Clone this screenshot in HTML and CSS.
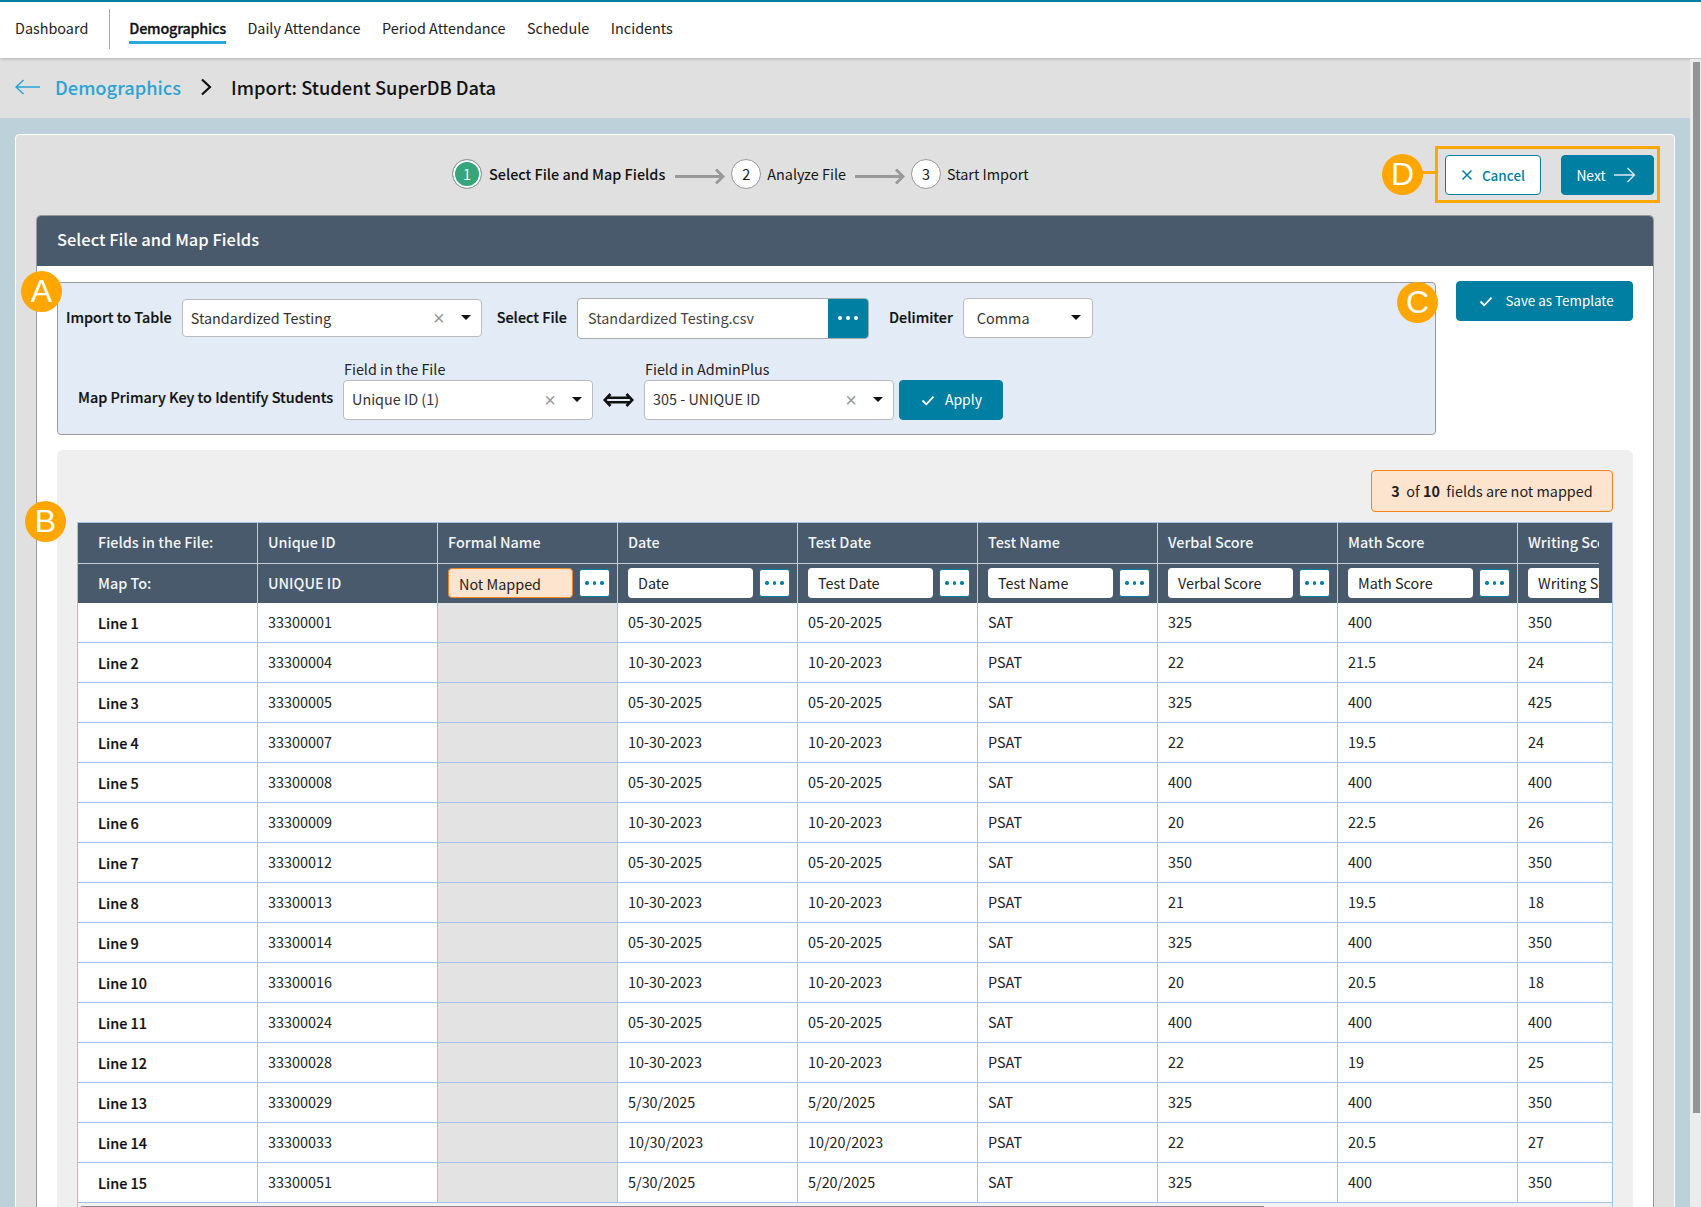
FILE: index.html
```html
<!DOCTYPE html>
<html lang="en">
<head>
<meta charset="utf-8">
<title>Import: Student SuperDB Data</title>
<link rel="stylesheet" href="styles.css">
</head>
<body>
<nav class="nav">
  <a class="nav-link dash">Dashboard</a>
  <span class="nav-sep"></span>
  <a class="nav-link active">Demographics</a>
  <a class="nav-link">Daily Attendance</a>
  <a class="nav-link">Period Attendance</a>
  <a class="nav-link">Schedule</a>
  <a class="nav-link">Incidents</a>
</nav>
<header class="crumbs">
  <svg class="crumb-back" width="25" height="16" viewBox="0 0 25 16"><path d="M25 8H1M8.500 1 1 8l7.500 7" fill="none" stroke="#29a3d6" stroke-width="1.500"/></svg>
  <a class="crumb-link">Demographics</a>
  <svg class="crumb-chev" width="12" height="18" viewBox="0 0 12 18"><path d="M2 1.500 10 9l-8 7.500" fill="none" stroke="#111" stroke-width="2.200"/></svg>
  <h1 class="crumb-title">Import: Student SuperDB Data</h1>
</header>
<main class="stage">
  <section class="card">
    <div class="topbar">
      <ol class="steps">
        <li class="step current"><span class="bubble">1</span><span>Select File and Map Fields</span></li>
        <li class="step-arrow"><svg width="50" height="16" viewBox="0 0 50 16"><path d="M0 8.500H48M41 1.500l7 7-7 7" fill="none" stroke="#999" stroke-width="2.800"/></svg></li>
        <li class="step"><span class="bubble">2</span><span>Analyze File</span></li>
        <li class="step-arrow second"><svg width="50" height="16" viewBox="0 0 50 16"><path d="M0 8.500H48M41 1.500l7 7-7 7" fill="none" stroke="#999" stroke-width="2.800"/></svg></li>
        <li class="step"><span class="bubble">3</span><span>Start Import</span></li>
      </ol>
      <div class="actions">
        <button class="btn btn-ghost cancel"><svg width="12" height="12" viewBox="0 0 12 12"><path d="M1.500 1.500l9 9M10.500 1.500l-9 9" stroke="#007fa3" stroke-width="1.500" fill="none"/></svg>Cancel</button>
        <button class="btn btn-solid next">Next<svg width="22" height="16" viewBox="0 0 22 16"><path d="M0 8H20.500M13.500 1l7 7-7 7" fill="none" stroke="#dcedf3" stroke-width="1.300"/></svg></button>
        <span class="callout-box"></span>
        <span class="callout-line"></span>
        <span class="marker marker-d">D</span>
      </div>
    </div>

    <section class="panel">
      <h2 class="panel-title">Select File and Map Fields</h2>
      <div class="panel-body">
        <div class="top-tools">
          <div class="setup">
            <span class="marker marker-a">A</span>
            <div class="setup-row first">
              <label class="lbl">Import to Table</label>
              <div class="select s-table"><span class="sel-text">Standardized Testing</span><span class="clear">×</span><span class="caret"></span></div>
              <label class="lbl l-file">Select File</label>
              <div class="file"><span class="file-name">Standardized Testing.csv</span><span class="file-btn"><i></i><i></i><i></i></span></div>
              <label class="lbl l-delim">Delimiter</label>
              <div class="select s-delim"><span class="sel-text">Comma</span><span class="caret"></span></div>
            </div>
            <div class="setup-row second">
              <label class="lbl l-map">Map Primary Key to Identify Students</label>
              <div class="field">
                <span class="field-cap">Field in the File</span>
                <div class="select s-map"><span class="sel-text">Unique ID (1)</span><span class="clear">×</span><span class="caret"></span></div>
              </div>
              <svg class="swap" width="31" height="16" viewBox="0 0 31 16"><path d="M7.500 2 1.800 8l5.700 6M23.500 2l5.700 6-5.700 6M3 5.700H28M3 10.300H28" fill="none" stroke="#111" stroke-width="2.600"/></svg>
              <div class="field">
                <span class="field-cap">Field in AdminPlus</span>
                <div class="select s-map"><span class="sel-text">305 - UNIQUE ID</span><span class="clear">×</span><span class="caret"></span></div>
              </div>
              <button class="btn btn-solid apply"><svg width="14" height="11" viewBox="0 0 14 11"><path d="M1.500 5.500 5.300 9.300 12.500 1.700" fill="none" stroke="#fff" stroke-width="1.800"/></svg><span>Apply</span></button>
            </div>
          </div>
          <div class="save-wrap">
            <span class="marker marker-c">C</span>
            <button class="btn btn-solid save"><svg width="14" height="11" viewBox="0 0 14 11"><path d="M1.500 5.500 5.300 9.300 12.500 1.700" fill="none" stroke="#fff" stroke-width="1.800"/></svg><span>Save as Template</span></button>
          </div>
        </div>

        <div class="mapping">
          <span class="marker marker-b">B</span>
          <div class="notice"><b>3</b>&nbsp; of <b>10</b>&nbsp; fields are not mapped</div>
          <div class="grid-wrap">
            <table class="grid">
              <colgroup><col class="c1"><col class="c"><col class="c"><col class="c"><col class="c"><col class="c"><col class="c"><col class="c"><col class="clast"></colgroup>
              <thead>
                <tr class="h1">
                  <th class="first">Fields in the File:</th><th>Unique ID</th><th>Formal Name</th><th>Date</th><th>Test Date</th><th>Test Name</th><th>Verbal Score</th><th>Math Score</th>
                  <th class="cut"><div class="clip">Writing Score</div></th>
                </tr>
                <tr class="h2">
                  <th class="first">Map To:</th><th>UNIQUE ID</th>
                  <td><div class="map"><span class="map-in warn">Not Mapped</span><span class="dots"><i></i><i></i><i></i></span></div></td>
                  <td><div class="map"><span class="map-in">Date</span><span class="dots"><i></i><i></i><i></i></span></div></td>
                  <td><div class="map"><span class="map-in">Test Date</span><span class="dots"><i></i><i></i><i></i></span></div></td>
                  <td><div class="map"><span class="map-in">Test Name</span><span class="dots"><i></i><i></i><i></i></span></div></td>
                  <td><div class="map"><span class="map-in">Verbal Score</span><span class="dots"><i></i><i></i><i></i></span></div></td>
                  <td><div class="map"><span class="map-in">Math Score</span><span class="dots"><i></i><i></i><i></i></span></div></td>
                  <td class="cut"><div class="clip map-clip"><span class="map-in">Writing Score</span></div></td>
                </tr>
              </thead>
              <tbody>
                <tr><th>Line 1</th><td>33300001</td><td class="na"></td><td>05-30-2025</td><td>05-20-2025</td><td>SAT</td><td>325</td><td>400</td><td>350</td></tr>
                <tr><th>Line 2</th><td>33300004</td><td class="na"></td><td>10-30-2023</td><td>10-20-2023</td><td>PSAT</td><td>22</td><td>21.5</td><td>24</td></tr>
                <tr><th>Line 3</th><td>33300005</td><td class="na"></td><td>05-30-2025</td><td>05-20-2025</td><td>SAT</td><td>325</td><td>400</td><td>425</td></tr>
                <tr><th>Line 4</th><td>33300007</td><td class="na"></td><td>10-30-2023</td><td>10-20-2023</td><td>PSAT</td><td>22</td><td>19.5</td><td>24</td></tr>
                <tr><th>Line 5</th><td>33300008</td><td class="na"></td><td>05-30-2025</td><td>05-20-2025</td><td>SAT</td><td>400</td><td>400</td><td>400</td></tr>
                <tr><th>Line 6</th><td>33300009</td><td class="na"></td><td>10-30-2023</td><td>10-20-2023</td><td>PSAT</td><td>20</td><td>22.5</td><td>26</td></tr>
                <tr><th>Line 7</th><td>33300012</td><td class="na"></td><td>05-30-2025</td><td>05-20-2025</td><td>SAT</td><td>350</td><td>400</td><td>350</td></tr>
                <tr><th>Line 8</th><td>33300013</td><td class="na"></td><td>10-30-2023</td><td>10-20-2023</td><td>PSAT</td><td>21</td><td>19.5</td><td>18</td></tr>
                <tr><th>Line 9</th><td>33300014</td><td class="na"></td><td>05-30-2025</td><td>05-20-2025</td><td>SAT</td><td>325</td><td>400</td><td>350</td></tr>
                <tr><th>Line 10</th><td>33300016</td><td class="na"></td><td>10-30-2023</td><td>10-20-2023</td><td>PSAT</td><td>20</td><td>20.5</td><td>18</td></tr>
                <tr><th>Line 11</th><td>33300024</td><td class="na"></td><td>05-30-2025</td><td>05-20-2025</td><td>SAT</td><td>400</td><td>400</td><td>400</td></tr>
                <tr><th>Line 12</th><td>33300028</td><td class="na"></td><td>10-30-2023</td><td>10-20-2023</td><td>PSAT</td><td>22</td><td>19</td><td>25</td></tr>
                <tr><th>Line 13</th><td>33300029</td><td class="na"></td><td>5/30/2025</td><td>5/20/2025</td><td>SAT</td><td>325</td><td>400</td><td>350</td></tr>
                <tr><th>Line 14</th><td>33300033</td><td class="na"></td><td>10/30/2023</td><td>10/20/2023</td><td>PSAT</td><td>22</td><td>20.5</td><td>27</td></tr>
                <tr><th>Line 15</th><td>33300051</td><td class="na"></td><td>5/30/2025</td><td>5/20/2025</td><td>SAT</td><td>325</td><td>400</td><td>350</td></tr>
              </tbody>
            </table>
            <div class="hscroll"><span class="hthumb"></span></div>
          </div>
        </div>
      </div>
    </section>
  </section>
</main>
<div class="vscroll"><span class="vthumb"></span></div>
</body>
</html>
```
FILE: styles.css
```css
* { box-sizing: border-box; }
html, body { height: 100%; }
body {
  margin: 0;
  width: 1701px;
  height: 1207px;
  overflow: hidden;
  position: relative;
  background: #bdd1da;
  color: #161616;
  font-family: "Noto Sans CJK SC", "Noto Sans", sans-serif;
  font-size: 14.4px;
  line-height: 20px;
}
i { display: block; }
h1, h2 { margin: 0; }
ol { list-style: none; margin: 0; padding: 0; }

.nav {
  height: 58px;
  border-top: 2px solid #007fa3;
  background: #fff;
  display: flex;
  align-items: center;
  padding: 0 0 4px 15px;
  gap: 21.5px;
  box-shadow: 0 1px 3px rgba(0,0,0,.22);
  position: relative;
}
.nav-link { color: #222; position: relative; }
.nav-sep { width: 1px; height: 40px; background: #aaa; margin: 2px -2px 0 -1px; }
.nav-link.active { font-weight: 500; color: #111; -webkit-text-stroke: .3px #111; letter-spacing: -.22px; }
.nav-link.active::after {
  content: "";
  position: absolute;
  left: 0; right: 0; bottom: -6px;
  height: 3px;
  background: #29a8dc;
}

.crumbs {
  height: 60px;
  background: #e0e0e0;
  display: flex;
  align-items: center;
  padding: 0 0 2px 15px;
  font-size: 18.3px;
}
.crumb-link { color: #29a3d6; margin-left: 15px; font-weight: 500; }
.crumb-chev { margin-left: 19px; }
.crumb-title { font-size: 18.3px; font-weight: 500; color: #111; margin-left: 19px; line-height: 24px; }

.stage { padding: 16px 15px 0 15px; width: 1690px; background: #bdd1da; height: 1089px; }
.card {
  height: 1100px;
  background: #e0e0e0;
  border: 1px solid #fff;
  border-radius: 4px;
  padding: 0 20px 0 20px;
}
.topbar { height: 80px; display: flex; align-items: center; position: relative; }
.steps { display: flex; align-items: center; margin-left: 416px; margin-top: -3px; }
.step { display: flex; align-items: center; gap: 6px; }
.step.current { font-weight: 500; color: #111; gap: 7px; }
.bubble {
  width: 30px; height: 30px;
  border-radius: 50%;
  background: #fff;
  border: 1px solid #999;
  display: flex; align-items: center; justify-content: center;
  font-weight: 400;
}
.current .bubble { background: #35a67c; color: #fff; box-shadow: inset 0 0 0 2px #fff; }
.step-arrow { margin: 4px 6px 0 10px; line-height: 0; }
.step-arrow.second { margin-left: 9px; }

.actions { margin-left: auto; display: flex; gap: 20px; position: relative; }
.btn {
  font: inherit;
  height: 40px;
  border-radius: 4px;
  display: inline-flex;
  align-items: center;
  justify-content: center;
  padding: 0;
  border: 1px solid #007fa3;
}
.btn-solid { background: #007fa3; color: #fff; }
.btn-ghost { background: #fff; color: #007fa3; }
.cancel { width: 96px; gap: 9px; font-weight: 500; font-size: 13.5px; }
.next { width: 93px; gap: 8px; font-weight: 400; font-size: 13.8px; padding-right: 3px; }
.callout-box {
  position: absolute;
  left: -10px; right: -6px; top: -9px; bottom: -8px;
  border: 3px solid #ffa700;
  pointer-events: none;
}
.callout-line { position: absolute; left: -24px; width: 14px; top: 16px; height: 3px; background: #ffa700; }
.marker {
  position: absolute;
  width: 41px; height: 41px;
  border-radius: 50%;
  background: #ffa700;
  color: #fff;
  font-family: "Liberation Sans", sans-serif;
  font-size: 32px;
  line-height: 41px;
  text-align: center;
}
.marker-d { left: -63px; top: -1px; }
.marker-a { left: -37px; top: -12px; }
.marker-c { left: -59px; top: 1px; }
.marker-b { left: -32px; top: 51px; }

.panel {
  height: 1000px;
  background: #fff;
  border: 1px solid #999;
  border-bottom: 0;
  border-radius: 5px 5px 0 0;
}
.panel-title {
  height: 50px;
  background: #485a6c;
  color: #fff;
  font-size: 16.5px;
  font-weight: 500;
  line-height: 46px;
  padding-left: 20px;
  border-radius: 4px 4px 0 0;
}
.panel-body { padding: 16px 19px 0 20px; }
.top-tools { display: flex; gap: 20px; align-items: flex-start; }

.setup {
  position: relative;
  flex: none;
  width: 1379px;
  height: 153px;
  background: #e3ecf6;
  border: 1px solid #999;
  border-radius: 4px;
}
.setup-row { display: flex; align-items: center; }
.setup-row.first { padding: 14px 0 0 8px; height: 56px; }
.setup-row.first .lbl { padding-bottom: 2px; }
.setup-row.second { padding: 21px 0 0 20px; align-items: flex-end; height: 81px; }
.lbl { font-weight: 500; color: #111; white-space: nowrap; -webkit-text-stroke: .2px #111; }
.l-file { margin-left: 15px; }
.l-delim { margin-left: 20px; }
.l-map { width: 265px; height: 33px; }

.select {
  height: 38px;
  background: #fff;
  border: 1px solid #bbb;
  border-radius: 4px;
  display: flex;
  align-items: center;
  padding: 0 10px 0 8px;
}
.sel-text { flex: 1; color: #333; }
.clear { color: #999; font-size: 20px; font-family: "Liberation Sans", sans-serif; margin-right: 16px; }
.caret { width: 0; height: 0; border: 5px solid transparent; border-top: 5px solid #111; border-bottom: 0; margin: 0 0 1px; }
.s-table { width: 300px; margin-left: 10px; }
.s-delim { width: 130px; margin-left: 10px; padding: 0 11px 1px 13px; height: 40px; }
.file {
  width: 292px; height: 41px;
  margin-left: 10px;
  background: #fff;
  border: 1px solid #aaa;
  border-radius: 4px;
  display: flex;
  align-items: center;
  padding-left: 10px;
  overflow: hidden;
}
.file-name { flex: 1; color: #444; padding-bottom: 1px; }
.file-btn {
  width: 40px; height: 39px;
  background: #007fa3;
  display: flex; align-items: center; justify-content: center; gap: 4px;
}
.file-btn i { width: 4px; height: 4px; border-radius: 50%; background: #fff; }

.field { display: flex; flex-direction: column; }
.field-cap { line-height: 19px; margin: 0 0 2px 1px; color: #222; }
.s-map { width: 250px; height: 40px; padding-left: 8px; padding-bottom: 3px; }
.s-map .caret { margin-top: 2px; }
.s-map .clear { margin-top: 3px; }
.swap { margin: 0 10px 12px; }
.apply { width: 104px; gap: 10px; margin-left: 5px; font-weight: 400; font-size: 14px; padding-left: 1px; }
.apply span, .save span { padding-bottom: 2px; }

.save-wrap { position: relative; margin-top: -1px; }
.save { width: 177px; gap: 12px; padding-left: 4px; font-weight: 400; font-size: 13.4px; }

.mapping {
  position: relative;
  margin-top: 15px;
  width: 1576px;
  height: 800px;
  background: #efefef;
  border-radius: 6px;
  padding: 20px 20px 0;
}
.notice {
  width: 242px; height: 42px;
  margin: 0 0 10px auto;
  background: #fde4cf;
  border: 1px solid #f5821f;
  border-radius: 4px;
  display: flex; align-items: center; justify-content: center;
  white-space: pre;
  color: #222;
}
.notice b { font-weight: 700; }
.grid-wrap {
  width: 1536px;
  background: #fff;
  border: 1px solid #a4c2e3;
  border-bottom: 0;
  overflow: hidden;
}
.grid { border-collapse: separate; border-spacing: 0; table-layout: fixed; width: 1534px; }
.c1, .c { width: 180px; }
.clast { width: 94px; }
.grid th, .grid td {
  padding: 0 10px;
  text-align: left;
  font-weight: 400;
  height: 40px;
  border-right: 1px solid #a4c2e3;
  border-bottom: 1px solid #a4c2e3;
  white-space: nowrap;
}
.grid tr > :last-child { border-right: 0; }
.grid tbody th { font-weight: 500; padding-left: 20px; color: #111; -webkit-text-stroke: .2px #111; }
.grid tbody td { color: #222; padding-bottom: 1px; }
.grid thead th, .grid thead td {
  background: #485a6c;
  color: #f2f5f7;
  border-right-color: #c2ccd6;
  border-bottom-color: #c2ccd6;
}
.grid thead th { font-weight: 500; padding-bottom: 2px; }
.grid thead .h2 th { padding-bottom: 1px; }
.grid thead .first { padding-left: 20px; }
.h1 th { height: 41px; }
.h2 th, .h2 td { height: 39px; border-bottom: 0; }
.grid .h2 td { padding-right: 0; }
.grid .na { background: #e3e3e3; }
.grid .cut { padding: 0 0 0 10px; }
.grid .h1 .cut { padding-bottom: 3px; }
.h1 .cut { border-bottom: 0; background-image: linear-gradient(#c2ccd6, #c2ccd6); background-repeat: no-repeat; background-size: 81px 1px; background-position: 0 100%; }
.clip { width: 71px; overflow: hidden; }
.map { display: flex; gap: 6px; align-items: center; margin-top: -1px; }
.map-in {
  display: block;
  width: 125px; height: 30px;
  flex: none;
  background: #fff;
  border-radius: 4px;
  color: #222;
  padding-left: 10px;
  line-height: 30px;
  white-space: nowrap;
}
.map-in.warn { background: #fde4cf; border: 1px solid #f5821f; padding-left: 10px; line-height: 30px; }
.dots {
  width: 31px; height: 28px;
  flex: none;
  background: #fff;
  border: 1px solid #007fa3;
  border-radius: 3px;
  display: flex; align-items: center; justify-content: center; gap: 4px;
}
.dots i { width: 3.5px; height: 3.5px; border-radius: 50%; background: #007fa3; }
.map-clip { margin-top: -1px; }
.map-clip .map-in { border-radius: 4px 0 0 4px; }
.hscroll { height: 4px; background: #f1f1f1; padding-left: 3px; display: flex; align-items: flex-end; }
.hthumb { display: block; width: 1183px; height: 1px; background: #888; }

.vscroll { position: absolute; top: 59px; right: 0; width: 11px; height: 1148px; background: #ececec; }
.vthumb { position: absolute; left: 3px; top: 3px; width: 7px; height: 1051px; background: #949494; }
```
